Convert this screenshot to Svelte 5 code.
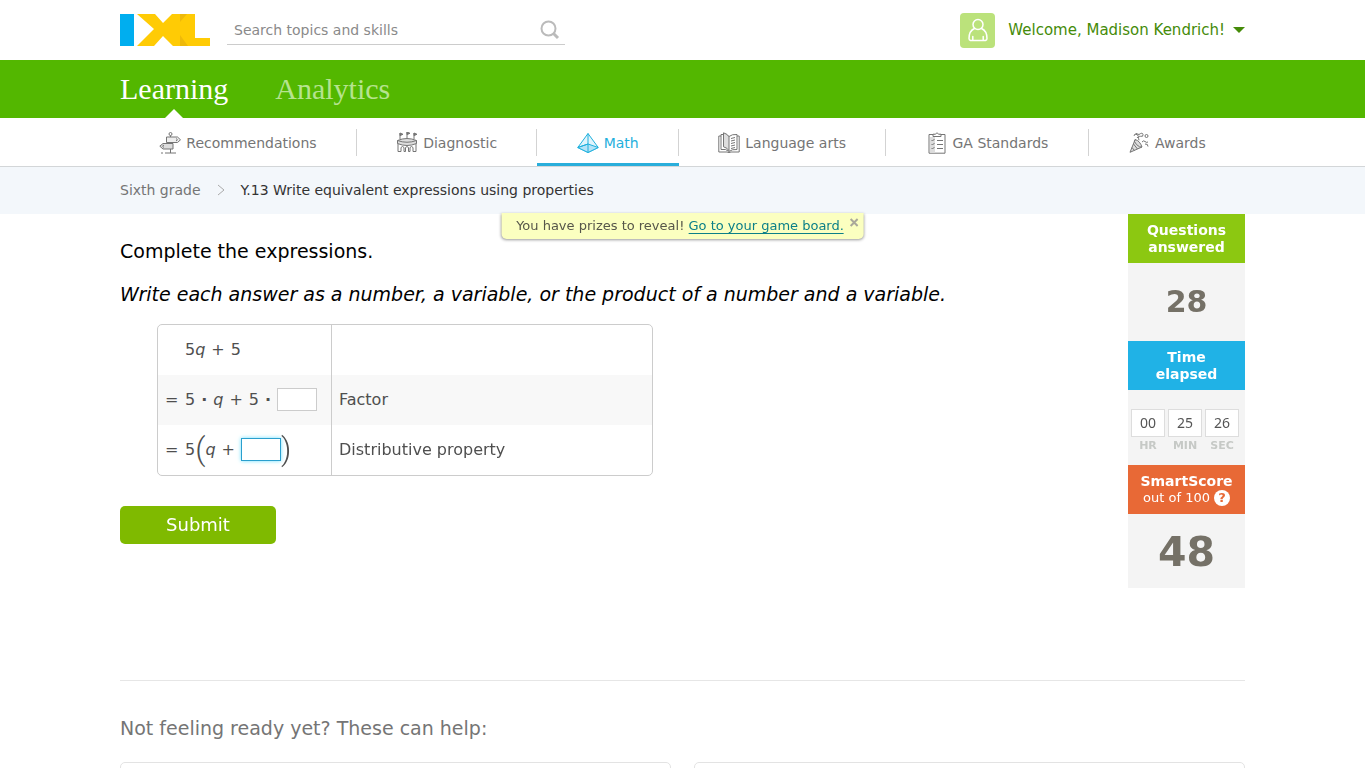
<script>
    import { onMount } from 'svelte';

    let search = '';
    let factor = '';
    let inner = '';
    let innerInput;
    let showPrizes = true;

    let answered = 28;
    let smartScore = 48;

    const tabs = [
        { name: 'Recommendations', icon: 'sign' },
        { name: 'Diagnostic', icon: 'arena' },
        { name: 'Math', icon: 'pyramid' },
        { name: 'Language arts', icon: 'book' },
        { name: 'GA Standards', icon: 'clipboard' },
        { name: 'Awards', icon: 'party' }
    ];
    let current = 'Math';

    const time = [
        { value: '00', unit: 'HR' },
        { value: '25', unit: 'MIN' },
        { value: '26', unit: 'SEC' }
    ];

    onMount(() => {
        innerInput.focus();
    });
</script>

<header class="top wrap">
    <a class="logo" href="#home" aria-label="IXL">
        <svg width="90" height="32" viewBox="0 0 90 32">
            <path fill="#00aeef" d="M0 0h14v32H0z" />
            <path fill="#ffcb05" d="M17 0h18l8 9 9-9h23v24h15v8H53l-10-10-9 10H17l17-17z" />
            <path fill="#eeb90a" d="M60 0h7l-7 8zM60 21l8 11h-8z" />
        </svg>
    </a>
    <form class="search" role="search" on:submit|preventDefault>
        <input type="text" aria-label="Search topics and skills" placeholder="Search topics and skills" bind:value={search}>
        <button type="submit" aria-label="Search">
            <svg width="20" height="20" viewBox="0 0 20 20" fill="none" stroke="#bbb">
                <circle cx="8.5" cy="8.5" r="7" stroke-width="2" />
                <path d="M13.5 13.5l4.5 4.5" stroke-width="3" />
            </svg>
        </button>
    </form>
    <button class="user">
        <span class="avatar">
            <svg width="22" height="25" viewBox="0 0 22 25" fill="none" stroke="#fff" stroke-width="1.5" stroke-linecap="round" stroke-linejoin="round">
                <circle cx="11" cy="6.5" r="5" />
                <path d="M7.5 10.5C4 12 2 15.500 2 20.500q0 1.500 1.500 2h15q1.500-.5 1.500-2c0-5-2-8.500-5.500-10M5.800 18.500v4M16.200 18.500v4" />
            </svg>
        </span>
        Welcome, Madison Kendrich!
        <span class="caret"></span>
    </button>
</header>

<nav class="primary wrap">
    <a class="active" href="#learning">Learning</a>
    <a href="#analytics">Analytics</a>
</nav>

<nav class="subjects wrap">
    {#each tabs as tab}
        <a href="#{tab.icon}" class:current={tab.name === current}>
            <span class="tab">
                <svg width="22" height="22" viewBox="0 0 22 22" fill="none" stroke="currentColor" stroke-linejoin="round">
                    {#if tab.icon === 'sign'}
                        <circle cx="11.500" cy="2" r="1.500" />
                        <path fill="#eee" d="M7.500 5h11l3 2.800-3 2.700h-11z" />
                        <path fill="#ddd" d="M14 11.500H4L.8 14.200 4 17h10z" />
                        <path d="M11.500 3.500V5M11.500 17v4M6 21h11M2 21h2M17 6.500l1.500 1.300L17 9M5 13l-1.500 1.200L5 15.500" />
                    {:else if tab.icon === 'arena'}
                        <path d="M4 7V1M11 6V0M18 7V1" />
                        <path fill="currentColor" d="M4 1l3 1.300L4 3.600zM11 0l3 1.300-3 1.300zM18 1l3 1.300-3 1.300z" />
                        <path d="M2 9.500v10h3v-4q1.500-2 3 0v4h1.500v-4q1.500-2 3 0v4H14v-4q1.500-2 3 0v4h3v-10" />
                        <path fill="#ddd" d="M1.500 8.500Q11 4.500 20.500 8.500v3Q11 15.500 1.500 11.500z" />
                        <path d="M1.500 8.500Q11 12 20.500 8.500" />
                    {:else if tab.icon === 'pyramid'}
                        <path fill="#e1f4fc" d="M11 1.500L.8 15.500 11 20.500l10.200-5z" />
                        <path fill="#b5e3f7" d="M.8 15.500L11 12l10.200 3.500-10.200 5z" />
                        <path d="M11 1.500V20.500M11 12L.8 15.500" />
                    {:else if tab.icon === 'book'}
                        <path d="M3 4H.8v16H9q2 1.200 4 0h8.200V4H19" />
                        <path fill="#fff" d="M3 2.500q5-1 8 2 3-2.500 8-2v15q-5-.5-8 2-3-3-8-2z" />
                        <path fill="#ddd" d="M5.500.8q4 1 5.500 4v14q-1.500-3-5.500-4z" />
                        <path d="M13 6.500l4-1M13 9l4-1M13 11.500l4-1M13 14l4-1M13 16.500l4-1" />
                    {:else if tab.icon === 'clipboard'}
                        <path fill="#fff" d="M3 2.500h16v18.700H3z" />
                        <path fill="#ddd" stroke="none" d="M4 5h5v15.700H4z" />
                        <path fill="#fff" d="M7 4.500V2.200h2.500q1.500-3 3 0H15v2.300z" />
                        <path d="M5.500 8l1 1 2-2M5.500 12l1 1 2-2M5.500 16l1 1 2-2M11 8.500h6M11 12.500h6M11 16.500h6" />
                    {:else}
                        <path fill="#ddd" d="M7.200 7.500Q12 9 14 15L2 20.300z" />
                        <path d="M7.200 7.500Q5 9 8.500 12.500T14 15M5.500 12l4 5M4 15.500l2.500 3M9 6q2.500-1.500.5-3.200T6 3.500q1.500-3.500 5-1 3.500-2.500 4 0t-2.500 1.800-1.500 4M14 10q1.500-2 3-.5t3 .5M17 12q3-.5 3 2.500" />
                        <circle cx="18.500" cy="4" r="1.500" />
                    {/if}
                </svg>
                {tab.name}
            </span>
        </a>
    {/each}
</nav>

<div class="crumbs wrap">
    <a href="#sixth">Sixth grade</a>
    <svg width="8" height="12" viewBox="0 0 8 12" fill="none" stroke="#aaa">
        <path d="M1 1l6 5-6 5" />
    </svg>
    <span>Y.13 Write equivalent expressions using properties</span>
</div>

<main class="wrap">
    {#if showPrizes}
        <div class="prizes">
            <span>You have prizes to reveal! <a href="#board">Go to your game board.</a></span>
            <button aria-label="Close" on:click={() => (showPrizes = false)}>
                <svg width="9" height="9" viewBox="0 0 9 9" stroke="#aaa89a" stroke-width="2">
                    <path d="M1 1l7 7M8 1L1 8" />
                </svg>
            </button>
        </div>
    {/if}

    <form class="question" on:submit|preventDefault>
        <p>Complete the expressions.</p>
        <p><i>Write each answer as a number, a variable, or the product of a number and a variable.</i></p>
        <table>
            <tbody>
                <tr>
                    <td>
                        <div class="math"><span class="eq"></span><span>5<i>q</i></span><span>+</span><span>5</span></div>
                    </td>
                    <td></td>
                </tr>
                <tr>
                    <td>
                        <div class="math">
                            <span class="eq">=</span><span>5</span><b>·</b><i>q</i><span>+</span><span>5</span><b>·</b>
                            <input type="text" aria-label="Factor" bind:value={factor}>
                        </div>
                    </td>
                    <td>Factor</td>
                </tr>
                <tr>
                    <td>
                        <div class="math">
                            <span class="eq">=</span><span class="group">5<span class="paren">(</span><i>q</i></span><span>+</span>
                            <span class="group">
                                <input type="text" aria-label="Distributive property" bind:value={inner} bind:this={innerInput}>
                                <span class="paren">)</span>
                            </span>
                        </div>
                    </td>
                    <td>Distributive property</td>
                </tr>
            </tbody>
        </table>
        <button class="submit" type="submit">Submit</button>
    </form>

    <aside>
        <h2 class="green">Questions<br>answered</h2>
        <div class="stat answered">{answered}</div>
        <h2 class="blue">Time<br>elapsed</h2>
        <div class="stat clock">
            {#each time as t}
                <div>
                    <span class="digits">{t.value}</span>
                    <span class="unit">{t.unit}</span>
                </div>
            {/each}
        </div>
        <h2 class="orange">SmartScore<small>out of 100 <button type="button">?</button></small></h2>
        <div class="stat score">{smartScore}</div>
    </aside>
</main>

<section class="help wrap">
    <h3>Not feeling ready yet? These can help:</h3>
    <div class="cards">
        <div class="card"></div>
        <div class="card"></div>
    </div>
</section>

<style>
    :global(body) {
        background: #fff;
        color: #000;
        font-family: Verdana, "DejaVu Sans", sans-serif;
        font-size: 14px;
    }

    a {
        color: inherit;
        text-decoration: none;
    }

    button {
        border: none;
        padding: 0;
        background: none;
        color: inherit;
        font: inherit;
        cursor: pointer;
    }

    input {
        box-sizing: border-box;
        font: inherit;
    }

    svg {
        display: block;
        flex: none;
    }

    .wrap {
        padding-left: 120px;
        padding-right: 120px;
    }

    .top {
        display: flex;
        align-items: center;
        height: 60px;
    }

    .search {
        display: flex;
        align-items: center;
        width: 338px;
        height: 29px;
        margin-left: 17px;
        border-bottom: 1px solid #ccc;
    }

    .search input {
        flex: 1;
        min-width: 0;
        border: none;
        outline: none;
        padding: 0 7px;
        background: none;
    }

    .search input::placeholder {
        color: #8a8a8a;
        opacity: 1;
    }

    .search button {
        margin-right: 5px;
    }

    .user {
        display: flex;
        align-items: center;
        gap: 8px;
        margin-left: auto;
        color: #458b09;
        font-size: 15px;
    }

    .avatar {
        display: flex;
        align-items: center;
        justify-content: center;
        width: 35px;
        height: 35px;
        margin-right: 5px;
        border-radius: 4px;
        background: #bbe27b;
    }

    .caret {
        border: 6px solid transparent;
        border-top-color: #458b09;
        border-bottom: none;
    }

    .primary {
        display: flex;
        gap: 47px;
        height: 58px;
        background: #53b700;
        color: #b6e38f;
        font-family: "Roboto Slab", "Liberation Serif", serif;
        font-size: 30px;
        line-height: 58px;
    }

    .primary .active {
        position: relative;
        color: #fff;
    }

    .primary .active::after {
        content: '';
        position: absolute;
        left: 50%;
        bottom: 0;
        margin-left: -9px;
        border: 9px solid transparent;
        border-top: none;
        border-bottom-color: #fff;
    }

    .subjects {
        display: flex;
        height: 48px;
        border-bottom: 1px solid #d3d6d8;
        color: #757575;
    }

    .subjects a {
        flex: 1 1 auto;
        padding-top: 11px;
        box-sizing: border-box;
        height: 48px;
    }

    .tab {
        display: flex;
        align-items: center;
        justify-content: center;
        gap: 5px;
        height: 27px;
        white-space: nowrap;
        border-right: 1px solid #d3d3d3;
    }

    .subjects a:last-child .tab {
        border-right: none;
    }

    .subjects .current {
        color: #1fb0dd;
        border-bottom: 3px solid #29aedb;
    }

    .crumbs {
        display: flex;
        align-items: center;
        gap: 16px;
        box-sizing: border-box;
        height: 47px;
        padding-bottom: 1px;
        background: #f3f7fb;
        color: #333;
    }

    .crumbs a {
        color: #757575;
    }

    main {
        position: relative;
        display: flex;
        justify-content: space-between;
        align-items: flex-start;
    }

    .prizes {
        position: absolute;
        top: -1px;
        left: 50%;
        transform: translateX(-50%);
        display: flex;
        gap: 6px;
        box-sizing: border-box;
        height: 26px;
        padding: 0 5px 0 15px;
        border-radius: 0 0 5px 5px;
        background: #fbffc0;
        box-shadow: 0 1px 3px rgba(0, 0, 0, .4);
        color: #56564a;
        font-size: 13px;
        line-height: 26px;
        white-space: nowrap;
    }

    .prizes a {
        color: #0b7f88;
        border-bottom: 1px solid #0b7f88;
    }

    .prizes button {
        align-self: flex-start;
        padding-top: 5px;
    }

    .question {
        padding-top: 26px;
    }

    .question p {
        margin: 0 0 21px;
        font-size: 19px;
        line-height: 22px;
    }

    table {
        width: 496px;
        margin: -2px 0 30px 37px;
        border: 1px solid #ccc;
        border-radius: 5px;
        border-spacing: 0;
        color: #4f4f4f;
        font-size: 16px;
    }

    td {
        box-sizing: border-box;
        height: 50px;
        padding: 0 7px 2px;
    }

    td:first-child {
        width: 174px;
        border-right: 1px solid #ccc;
    }

    tr:nth-child(2) {
        background: #f8f8f8;
    }

    .math {
        display: flex;
        align-items: center;
        gap: 6px;
    }

    .eq {
        width: 14px;
    }

    .group {
        display: flex;
        align-items: center;
    }

    .paren {
        font: 300 32px/32px Roboto, sans-serif;
    }

    .math input {
        width: 40px;
        height: 23px;
        padding: 0 4px;
        border: 1px solid #ccc;
        background: #fff;
        outline: none;
    }

    .math input:focus {
        border-color: #2a9fce;
        box-shadow: 0 0 4px #6fe0ff;
    }

    .submit {
        width: 156px;
        height: 38px;
        padding-bottom: 2px;
        border-radius: 5px;
        background: #7fba00;
        color: #fff;
        font-size: 18px;
    }

    aside {
        flex: none;
        width: 117px;
        text-align: center;
        background: #f4f4f4;
        color: #757167;
    }

    aside h2 {
        box-sizing: border-box;
        height: 49px;
        margin: 0;
        padding-top: 8px;
        color: #fff;
        font-size: 14px;
        line-height: 17px;
    }

    .green {
        background: #8cc811;
    }

    .blue {
        background: #20b2e6;
    }

    .orange {
        background: #e86936;
    }

    small {
        display: flex;
        align-items: center;
        justify-content: center;
        gap: 4px;
        font-size: 13px;
        font-weight: normal;
        line-height: 16px;
    }

    small button {
        width: 16px;
        height: 16px;
        border-radius: 50%;
        background: #fff;
        color: #e86936;
        font-weight: bold;
        line-height: 16px;
    }

    .stat {
        font-weight: bold;
    }

    .answered {
        font-size: 30px;
        line-height: 78px;
    }

    .clock {
        display: flex;
        gap: 3px;
        height: 75px;
        padding-left: 3px;
    }

    .clock div {
        display: flex;
        flex-direction: column;
        width: 34px;
        padding-top: 19px;
    }

    .digits {
        height: 26px;
        border: 1px solid #ddd;
        background: #fff;
        color: #555;
        font: 14px/26px "Noto Sans", "Open Sans", sans-serif;
    }

    .unit {
        color: #c6c9c6;
        font-size: 11px;
        line-height: 17px;
    }

    .clock, .score {
        box-sizing: border-box;
    }

    .score {
        height: 74px;
        font-size: 41px;
        line-height: 76px;
    }

    .help {
        margin-top: 92px;
    }

    .help h3 {
        margin: 0;
        padding: 36px 0 22px;
        border-top: 1px solid #e6e6e6;
        color: #757575;
        font-size: 19px;
        font-weight: normal;
        line-height: 23px;
    }

    .cards {
        display: grid;
        grid-template-columns: 1fr 1fr;
        gap: 23px;
    }

    .card {
        height: 140px;
        border: 1px solid #e3e3e3;
        border-radius: 5px;
    }
</style>
